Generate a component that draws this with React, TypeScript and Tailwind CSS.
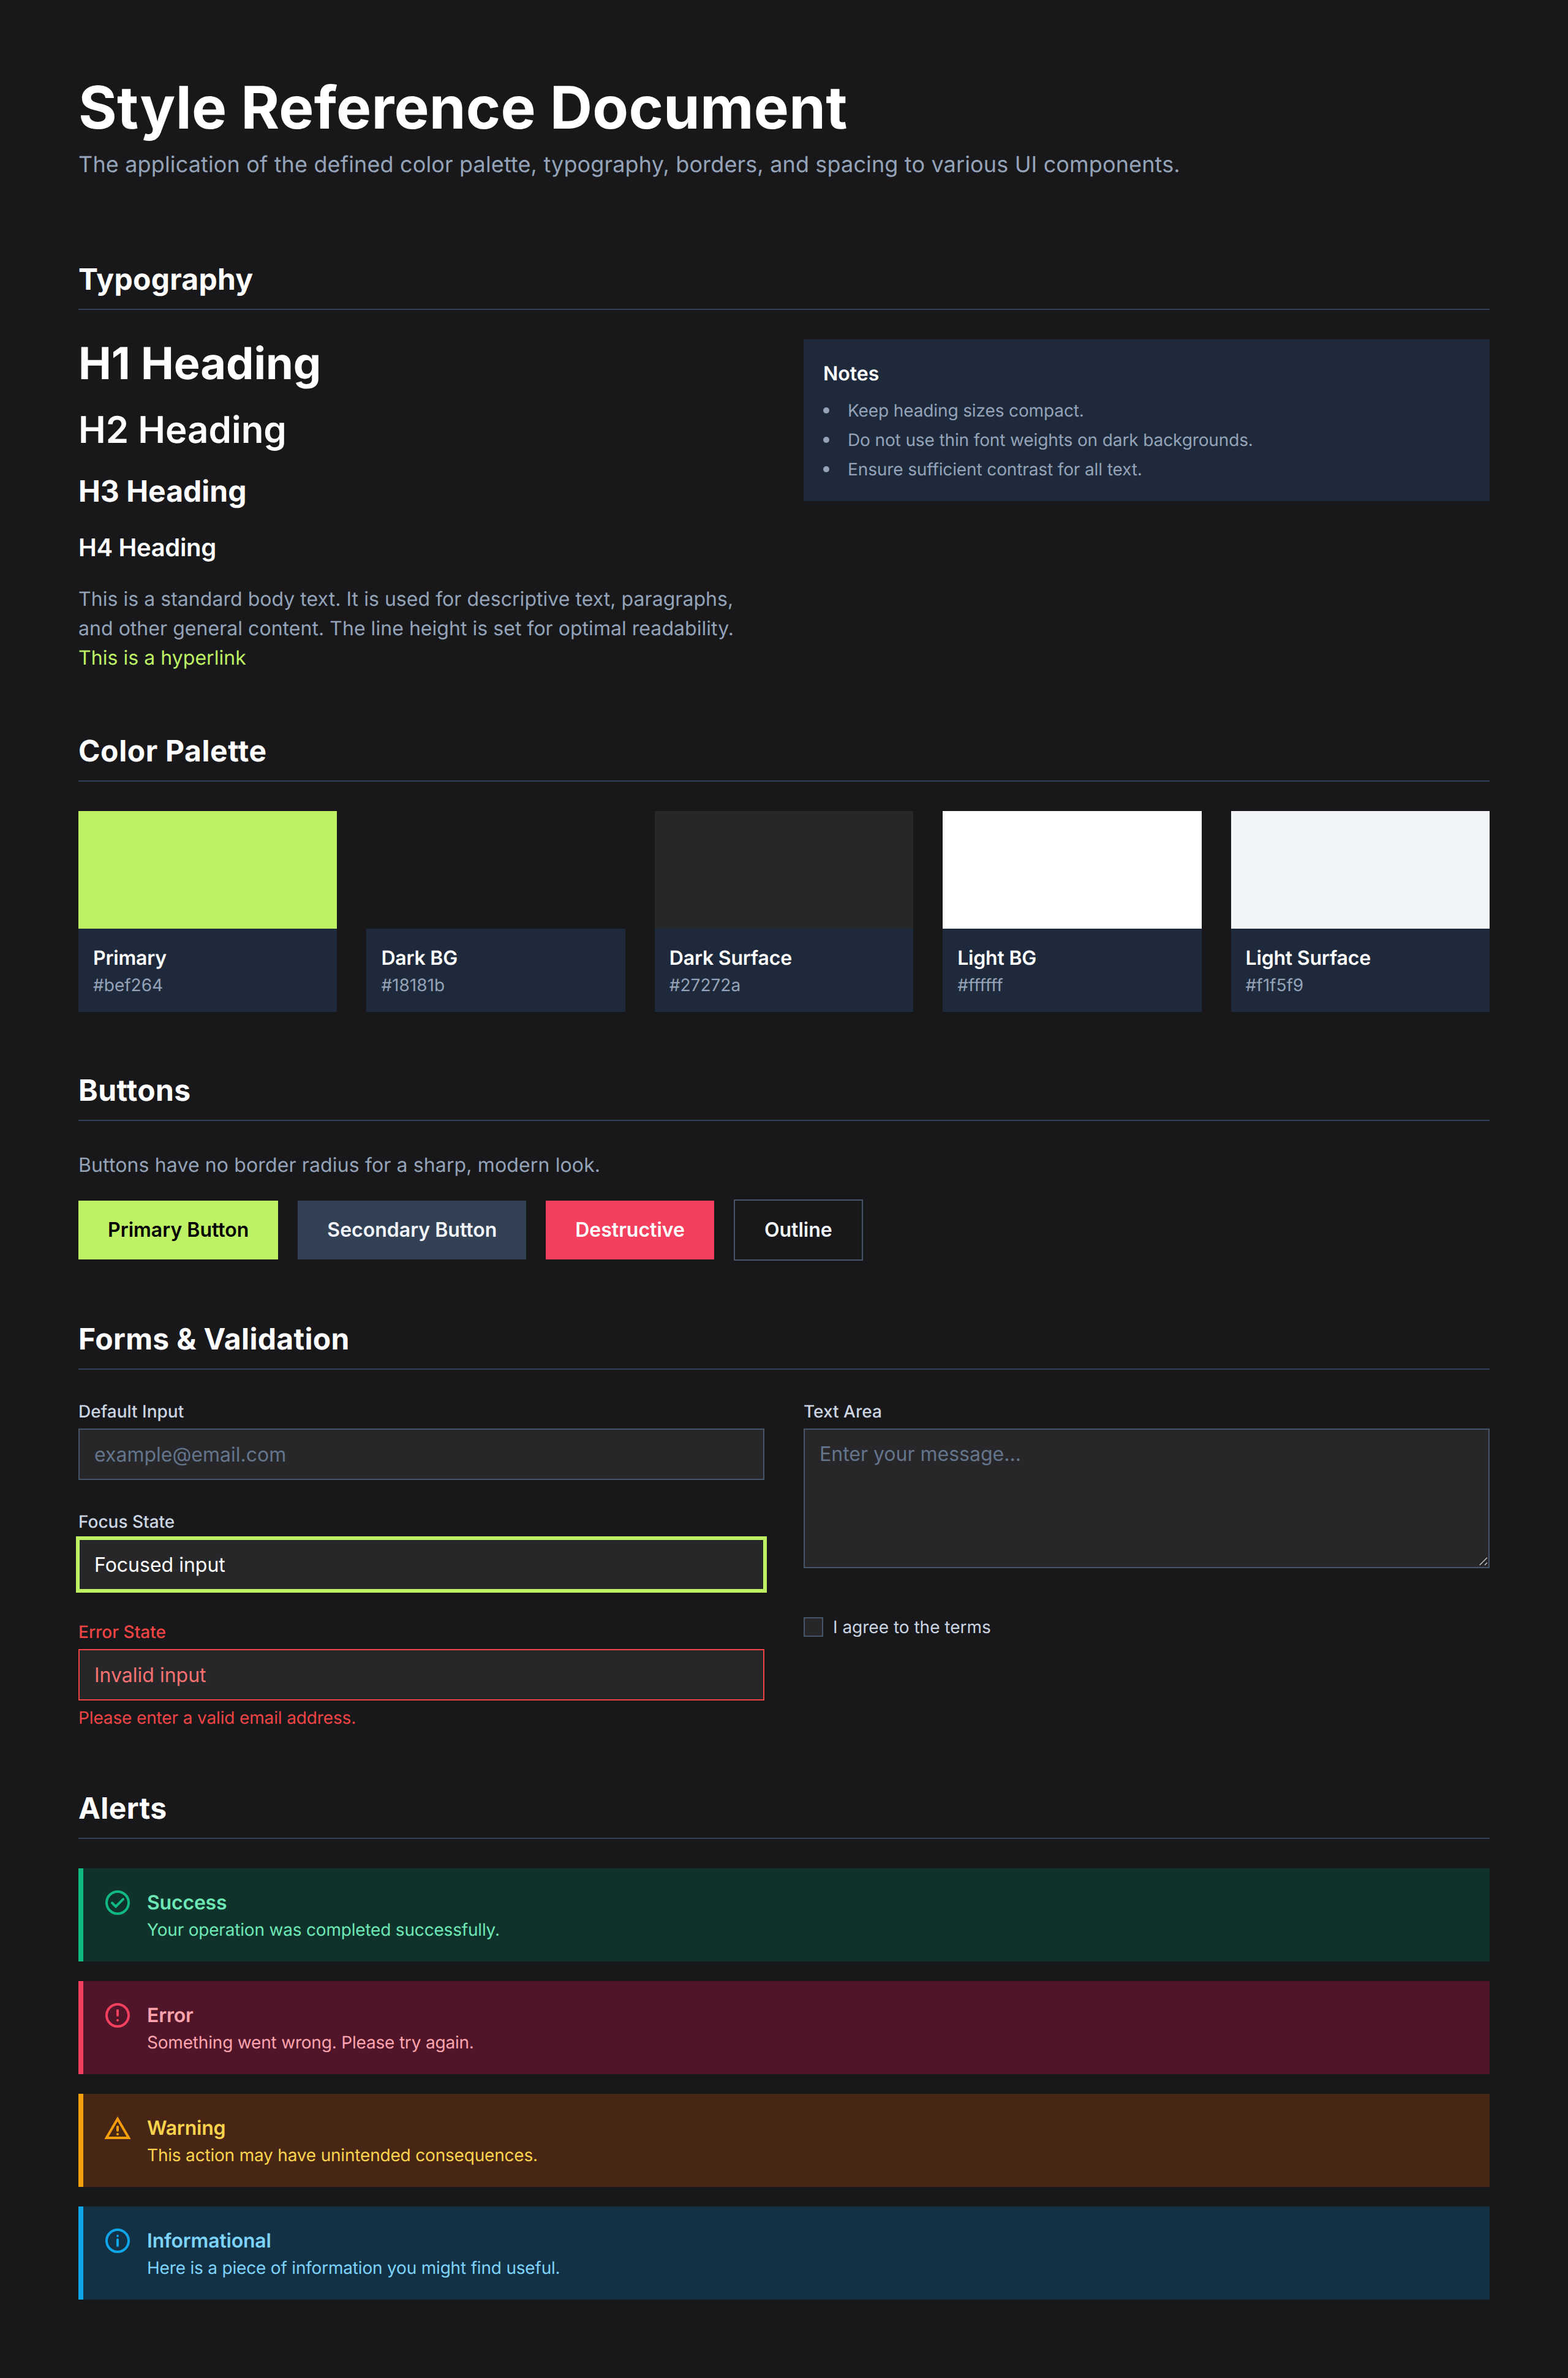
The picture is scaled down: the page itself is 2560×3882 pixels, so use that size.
import React from "react";

function H({ children, t }: { children: React.ReactNode; t: string }) {
  return (
    <h2 className={"text-[48px] leading-[64px] font-bold text-white pb-4 border-b-2 border-[#334155] mb-12 " + t}>
      {children}
    </h2>
  );
}

const swatches = [
  { n: "Primary", h: "#bef264", c: "bg-[#bef264]" },
  { n: "Dark BG", h: "#18181b", c: "bg-[#18181b]" },
  { n: "Dark Surface", h: "#27272a", c: "bg-[#27272a]" },
  { n: "Light BG", h: "#ffffff", c: "bg-[#ffffff]" },
  { n: "Light Surface", h: "#f1f5f9", c: "bg-[#f1f5f9]" },
];

const inputBase =
  "block w-full h-[84px] bg-[#27272a] border-2 px-6 py-4 text-[32px] leading-[48px] outline-none rounded-none";
const labelBase = "block text-[28px] leading-[40px] font-medium mb-2";
const btn = "px-12 py-6 text-[32px] leading-[48px] font-semibold";
const notesLi =
  "relative pl-10 before:absolute before:left-0 before:top-[15px] before:w-[10px] before:h-[10px] before:rounded-full before:bg-[#94a3b8]";

function Icon({ d, className }: { d: string; className: string }) {
  return (
    <svg
      viewBox="0 0 24 24"
      fill="none"
      stroke="currentColor"
      strokeWidth={2}
      strokeLinecap="round"
      className={"w-12 h-12 shrink-0 mr-6 " + className}
    >
      <path d={d} />
    </svg>
  );
}

const alerts = [
  {
    t: "Success",
    m: "Your operation was completed successfully.",
    box: "bg-[#0f332b] border-[#10b981]",
    ic: "text-[#10b981]",
    tx: "text-[#6ee7b7]",
    d: "M7.500 12.200l3 3 6-6M21 12a9 9 0 11-18 0 9 9 0 0118 0z",
  },
  {
    t: "Error",
    m: "Something went wrong. Please try again.",
    box: "bg-[#501529] border-[#f43f5e]",
    ic: "text-[#f43f5e]",
    tx: "text-[#fda4af]",
    d: "M12 8v4m0 4h.01M21 12a9 9 0 11-18 0 9 9 0 0118 0z",
  },
  {
    t: "Warning",
    m: "This action may have unintended consequences.",
    box: "bg-[#482615] border-[#f59e0b]",
    ic: "text-[#f59e0b]",
    tx: "text-[#fcd34d]",
    d: "M12 4.500L2.900 20h18.200L12 4.500zM12 11v3m0 3h.01",
  },
  {
    t: "Informational",
    m: "Here is a piece of information you might find useful.",
    box: "bg-[#123144] border-[#0ea5e9]",
    ic: "text-[#0ea5e9]",
    tx: "text-[#7dd3fc]",
    d: "M12 11v5m0-8h.01M21 12a9 9 0 11-18 0 9 9 0 0118 0z",
  },
];

export default function App() {
  return (
    <div className="min-h-[3882px] bg-[#18181b] px-32 pt-32 text-[#94a3b8] font-['Inter','Noto_Sans',sans-serif] [text-rendering:geometricPrecision]">
      <header className="mb-32">
        <h1 className="text-[96px] leading-[96px] font-bold text-white tracking-[0.2px]">Style Reference Document</h1>
        <p className="mt-4 text-[36px] leading-[56px] text-[#94a3b8] tracking-[0.14px]">
          The application of the defined color palette, typography, borders, and spacing to various UI components.
        </p>
      </header>

      <section className="mb-24">
        <H t="tracking-[0.25px]">Typography</H>
        <div className="grid grid-cols-2 gap-16 items-start">
          <div className="flex flex-col gap-8">
            <div className="text-[72px] leading-[80px] font-bold text-white">H1 Heading</div>
            <div className="text-[60px] leading-[72px] font-semibold text-white">H2 Heading</div>
            <div className="text-[48px] leading-[64px] font-bold text-white">H3 Heading</div>
            <div className="text-[40px] leading-[56px] font-semibold text-white tracking-[-0.35px]">H4 Heading</div>
            <p className="text-[32px] leading-[48px] tracking-[0.04px]">
              This is a standard body text. It is used for descriptive text, paragraphs, and other general content. The line height is set for optimal readability.{" "}
              <a className="text-[#bef264]">This is a hyperlink</a>
            </p>
          </div>
          <div className="bg-[#1e293b] p-8">
            <div className="text-[32px] leading-[48px] font-semibold text-white mb-4">Notes</div>
            <ul className="text-[28px] leading-[40px] flex flex-col gap-2 tracking-[-0.12px]">
              <li className={notesLi}>Keep heading sizes compact.</li>
              <li className={notesLi}>Do not use thin font weights on dark backgrounds.</li>
              <li className={notesLi}>Ensure sufficient contrast for all text.</li>
            </ul>
          </div>
        </div>
      </section>

      <section className="mb-24">
        <H t="tracking-[0.6px]">Color Palette</H>
        <div className="grid grid-cols-5 gap-12">
          {swatches.map((s) => (
            <div key={s.n}>
              <div className={"h-48 " + s.c} />
              <div className="bg-[#1e293b] p-6">
                <div className="text-[32px] leading-[48px] font-semibold text-white tracking-[-0.2px]">{s.n}</div>
                <div className="text-[28px] leading-[40px] text-[#94a3b8]">{s.h}</div>
              </div>
            </div>
          ))}
        </div>
      </section>

      <section className="mb-24">
        <H t="tracking-[0.4px]">Buttons</H>
        <p className="text-[32px] leading-[48px] mb-8 tracking-[0.13px]">Buttons have no border radius for a sharp, modern look.</p>
        <div className="flex items-center gap-8">
          <button className={btn + " bg-[#bef264] text-black"}>Primary Button</button>
          <button className={btn + " bg-[#334155] text-[#f1f5f9]"}>Secondary Button</button>
          <button className={btn + " bg-[#f43f5e] text-white"}>Destructive</button>
          <button className={btn + " border-2 border-[#475569] text-[#f1f5f9]"}>Outline</button>
        </div>
      </section>

      <section className="mb-24">
        <H t="tracking-[0.34px]">Forms &amp; Validation</H>
        <div className="grid grid-cols-2 gap-16 items-start">
          <div className="flex flex-col gap-12">
            <div>
              <label className={labelBase + " text-[#cbd5e1]"}>Default Input</label>
              <input
                className={inputBase + " border-[#475569] text-white placeholder:text-[#64748b]"}
                placeholder="example@email.com"
              />
            </div>
            <div>
              <label className={labelBase + " text-[#cbd5e1]"}>Focus State</label>
              <input
                className={inputBase + " border-[#bef264] ring-4 ring-[#bef264] text-white"}
                defaultValue="Focused input"
              />
            </div>
            <div>
              <label className={labelBase + " text-[#ef4444]"}>Error State</label>
              <input
                className={inputBase + " border-[#ef4444] text-[#f87171]"}
                defaultValue="Invalid input"
              />
              <p className="mt-2 text-[28px] leading-[40px] text-[#ef4444] tracking-[-0.14px]">Please enter a valid email address.</p>
            </div>
          </div>
          <div>
            <label className={labelBase + " text-[#cbd5e1]"}>Text Area</label>
            <div className="relative">
              <textarea
                rows={4}
                placeholder="Enter your message..."
                className="block w-full h-[228px] bg-[#27272a] border-2 border-[#475569] px-6 py-4 text-[32px] leading-[48px] text-white placeholder:text-[#64748b] outline-none rounded-none resize-none"
              />
              <svg viewBox="0 0 20 20" className="absolute right-[2px] bottom-[2px] w-5 h-5" fill="none">
                <path d="M5.700 17L18 4.700M14 17L18 13" stroke="#111114" strokeWidth={4} />
                <path d="M5.700 17L18 4.700M14 17L18 13" stroke="#a8a8a8" strokeWidth={2} />
              </svg>
            </div>
            <label className="flex items-center gap-4 mt-[76px] text-[28px] leading-[40px] text-[#cbd5e1]">
              <input type="checkbox" className="appearance-none w-8 h-8 bg-[#27272a] border-2 border-[#475569] rounded-none" />
              I agree to the terms
            </label>
          </div>
        </div>
      </section>

      <section>
        <H t="tracking-[0.4px]">Alerts</H>
        <div className="flex flex-col gap-8">
          {alerts.map((a) => (
            <div key={a.t} className={"flex border-l-8 p-8 " + a.box}>
              <Icon d={a.d} className={a.ic} />
              <div className={a.tx}>
                <div className="text-[32px] leading-[48px] font-semibold tracking-[-0.2px]">{a.t}</div>
                <div className="text-[28px] leading-[40px] tracking-[-0.19px]">{a.m}</div>
              </div>
            </div>
          ))}
        </div>
      </section>
    </div>
  );
}
